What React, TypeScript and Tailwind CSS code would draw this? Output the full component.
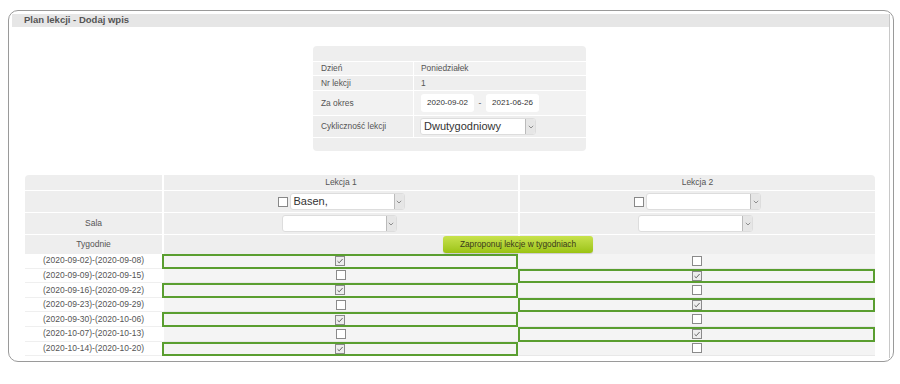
import React from "react";

const weeks = [
  "(2020-09-02)-(2020-09-08)",
  "(2020-09-09)-(2020-09-15)",
  "(2020-09-16)-(2020-09-22)",
  "(2020-09-23)-(2020-09-29)",
  "(2020-09-30)-(2020-10-06)",
  "(2020-10-07)-(2020-10-13)",
  "(2020-10-14)-(2020-10-20)",
];

function Box({ checked = false, light = false }: { checked?: boolean; light?: boolean }) {
  return (
    <span
      className={
        "inline-flex h-[10px] w-[10px] shrink-0 items-center justify-center border " +
        (light ? "border-[#888] bg-white" : "border-[#8a8a8a] " + (checked ? "bg-[#ededed]" : "bg-white"))
      }
    >
      {checked && (
        <svg width="8" height="8" viewBox="0 0 8 8">
          <path d="M1.5 4.2 L3.2 5.8 L6.6 2" fill="none" stroke="#555" strokeWidth="0.9" />
        </svg>
      )}
    </span>
  );
}

function Select({ value = "", w, big = false }: { value?: string; w: string; big?: boolean }) {
  return (
    <div className={"flex h-[17px] items-stretch rounded-[3px] border border-[#ddd] bg-white " + w}>
      <div className={"flex flex-1 items-center pl-[3px] text-[#333] " + (big ? "text-[11px]" : "text-[10px]")}>{value}</div>
      <div className="flex w-[10px] items-center justify-center rounded-r-[2px] border-l border-[#bbb] bg-[#e6e6e6]">
        <svg width="6" height="4" viewBox="0 0 6 4">
          <path d="M0.8 0.8 L3 3 L5.2 0.8" fill="none" stroke="#777" strokeWidth="0.8" />
        </svg>
      </div>
    </div>
  );
}

export default function App() {
  const font = { fontFamily: '"Liberation Sans", Arial, sans-serif' };
  return (
    <div className="h-[384px] w-[900px] bg-white pl-[8px] pt-[10px]" style={font}>
      <div className="h-[352px] w-[886px] overflow-hidden rounded-[10px] border border-[#9a9a9a] p-[3px]">
        <div className="h-full border-r border-[#c8c8c8]">
          <div className="flex h-[13px] items-center bg-[#e6e6e6] pl-[12px] text-[9.5px] font-bold text-[#555]">
            Plan lekcji - Dodaj wpis
          </div>

          <div className="mt-[19px] ml-[301px] w-[273px] overflow-hidden rounded-[4px] bg-[#eeeeee] text-[8.4px] text-[#555]">
            <div className="h-[15px]" />
            <div className="flex h-[14px] border-t border-white">
              <div className="flex w-[100px] items-center bg-[#f2f2f2] pl-[8px]">Dzień</div>
              <div className="flex flex-1 items-center border-l border-white bg-[#f2f2f2] pl-[7px]">Poniedziałek</div>
            </div>
            <div className="flex h-[15px] border-t border-white">
              <div className="flex w-[100px] items-center pl-[8px]">Nr lekcji</div>
              <div className="flex flex-1 items-center border-l border-white pl-[7px]">1</div>
            </div>
            <div className="flex h-[25px] border-t border-white">
              <div className="flex w-[100px] items-center bg-[#f2f2f2] pl-[8px]">Za okres</div>
              <div className="flex flex-1 items-center border-l border-white bg-[#f2f2f2] pl-[7px]">
                <div className="flex h-[18px] w-[53px] items-center justify-center rounded-[3px] bg-white text-[8px] text-[#333]">
                  2020-09-02
                </div>
                <span className="mx-[4px] w-[4px] text-center">-</span>
                <div className="flex h-[18px] w-[53px] items-center justify-center rounded-[3px] bg-white text-[8px] text-[#333]">
                  2021-06-26
                </div>
              </div>
            </div>
            <div className="flex h-[22px] border-t border-white">
              <div className="flex w-[100px] items-center pl-[8px]">Cykliczność lekcji</div>
              <div className="flex flex-1 items-center border-l border-white pl-[6px]">
                <Select value="Dwutygodniowy" w="w-[116px]" big />
              </div>
            </div>
            <div className="h-[14px] border-t border-white" />
          </div>

          <div className="mt-[24px] ml-[13px] w-[850px] overflow-hidden rounded-t-[4px] text-[8.5px] text-[#555]">
            <div className="grid grid-cols-[137px_356px_357px]">
              <div className="h-[15px] bg-[#eeeeee]" />
              <div className="flex h-[15px] items-center justify-center border-l-2 border-white bg-[#eeeeee]">Lekcja 1</div>
              <div className="flex h-[15px] items-center justify-center border-l-2 border-white bg-[#eeeeee]">Lekcja 2</div>

              <div className="h-[22px] border-t border-white bg-[#eeeeee]" />
              <div className="flex h-[22px] items-center justify-center gap-[2px] border-t border-l-2 border-white bg-[#eeeeee]">
                <Box light />
                <Select value="Basen," w="w-[115px]" big />
              </div>
              <div className="flex h-[22px] items-center justify-center gap-[2px] border-t border-l-2 border-white bg-[#eeeeee]">
                <Box light />
                <Select w="w-[115px]" />
              </div>

              <div className="flex h-[22px] items-center justify-center border-t border-white bg-[#eeeeee]">Sala</div>
              <div className="flex h-[22px] items-center justify-center border-t border-l-2 border-white bg-[#eeeeee] pr-[4px]">
                <Select w="w-[115px]" />
              </div>
              <div className="flex h-[22px] items-center justify-center border-t border-l-2 border-white bg-[#eeeeee] pr-[4px]">
                <Select w="w-[115px]" />
              </div>

              <div className="flex h-[20px] items-center justify-center border-t border-white bg-[#eeeeee]">Tygodnie</div>
              <div className="relative h-[20px] border-t border-l-2 border-white bg-[#eeeeee]">
                <button className="absolute top-[1px] left-[279px] flex h-[17px] w-[150px] items-center justify-center rounded-[3px] bg-gradient-to-b from-[#c8e24c] to-[#9bc30e] text-[8.3px] text-[#3a3a1a] shadow-[0_1px_1px_rgba(0,0,0,0.15)]">
                  Zaproponuj lekcje w tygodniach
                </button>
              </div>
              <div className="h-[20px] border-t border-l-2 border-white bg-[#eeeeee]" />

              {weeks.map((w, i) => {
                const first = i % 2 === 0;
                return (
                  <React.Fragment key={w}>
                    <div className="flex h-[14.6px] items-center justify-center border-b border-[#efefef] bg-white">{w}</div>
                    <div
                      className={
                        "flex h-[14.6px] items-center justify-center bg-[#f4f4f4] " +
                        (first ? "border-2 border-[#5a9e30]" : "border-l-2 border-b border-l-white border-b-[#e8e8e8]")
                      }
                    >
                      <Box checked={first} />
                    </div>
                    <div
                      className={
                        "flex h-[14.6px] items-center justify-center bg-[#f4f4f4] " +
                        (!first ? "border-2 border-[#5a9e30]" : "border-b border-[#e8e8e8]")
                      }
                    >
                      <Box checked={!first} />
                    </div>
                  </React.Fragment>
                );
              })}
            </div>
          </div>
        </div>
      </div>
    </div>
  );
}
